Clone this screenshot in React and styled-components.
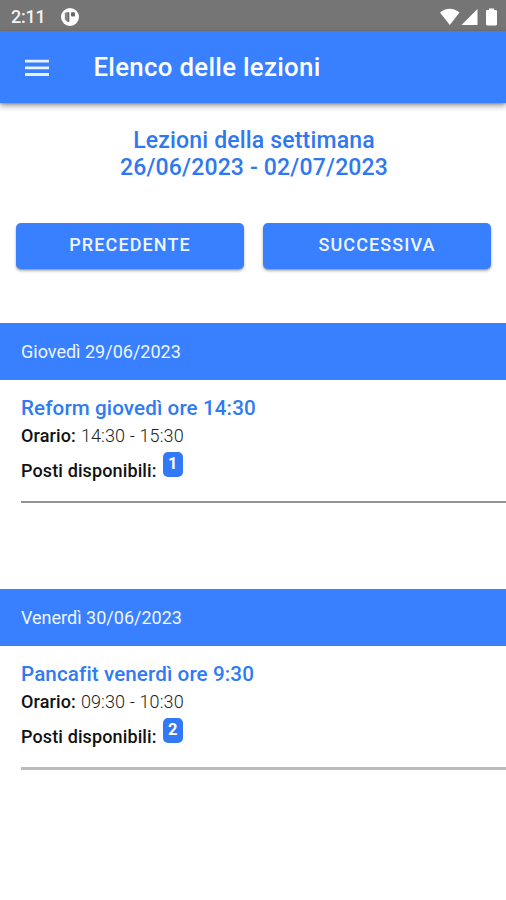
import React from 'react';
import styled, { createGlobalStyle } from 'styled-components';

const GlobalStyle = createGlobalStyle`
	* {
		box-sizing: border-box;
	}

	body {
		margin: 0;
		background: #fff;
		font-family: Roboto, sans-serif;
		overflow: hidden;
	}
`;

const Page = styled.div`
	display: flex;
	flex-direction: column;
	width: 100%;
	height: 100vh;
`;

const StatusBar = styled.div`
	display: flex;
	flex: none;
	align-items: center;
	height: 31px;
	padding: 2px 9px 0 11px;
	background: #757575;
	color: #fff;
`;

const Clock = styled.span`
	width: 50px;
	font-size: 18px;
	font-weight: 500;
	line-height: 20px;
	letter-spacing: -0.2px;
	color: #f2f2f2;
`;

const StatusIcons = styled.div`
	display: flex;
	margin-left: auto;
`;

const Toolbar = styled.header`
	display: flex;
	flex: none;
	align-items: center;
	height: 72px;
	padding: 0 25px;
	background: #3880ff;
	color: #fff;
	box-shadow: 0 3px 6px rgba(0, 0, 0, 0.36), 0 1px 2px rgba(0, 0, 0, 0.2);
`;

const MenuButton = styled.button`
	display: flex;
	margin: 2px 44.5px 0 0;
	padding: 0;
	border: 0;
	background: none;
	color: inherit;
`;

const Title = styled.h1`
	margin: 0;
	font-size: 25.8px;
	font-weight: 500;
	line-height: 30px;
	letter-spacing: 0.3px;
`;

const Week = styled.h2`
	margin: 24px 0 0 2px;
	font-size: 23px;
	font-weight: 500;
	line-height: 27px;
	letter-spacing: 0.17px;
	text-align: center;
	color: #2f78f2;
`;

const Buttons = styled.div`
	display: flex;
	gap: 19px;
	margin: 42px 15px 54px 16px;
`;

const WeekButton = styled.button`
	flex: 1;
	height: 46px;
	padding: 0 0 3px;
	border: 0;
	border-radius: 5px;
	background: #3880ff;
	color: #eef5ff;
	font-family: inherit;
	font-size: 18px;
	font-weight: 500;
	letter-spacing: 1.1px;
	box-shadow: 0 2px 3px rgba(0, 0, 0, 0.3), 0 1px 1px rgba(0, 0, 0, 0.15);
`;

const Day = styled.section`
	height: 266px;
`;

const DayHeader = styled.div`
	display: flex;
	align-items: center;
	height: 57px;
	padding-left: 21px;
	background: #3880ff;
	color: #eef5ff;
	font-size: 18px;
`;

const Lesson = styled.div`
	height: ${ props => props.thick ? '124px' : '123px' };
	margin-left: 21px;
	padding-top: 16px;
	border-bottom: ${ props => props.thick ? '3px solid #bcbcbc' : '2px solid #929292' };
`;

const LessonName = styled.h3`
	margin: 0;
	font-size: 20.6px;
	font-weight: 500;
	line-height: 25px;
	letter-spacing: 0.11px;
	color: #2f7af5;
`;

const Detail = styled.p`
	display: flex;
	margin: 1px 0 0;
	font-size: 18px;
	font-weight: 300;
	line-height: 27px;
	letter-spacing: 0.12px;
	color: #222;
`;

const Label = styled.span`
	margin-right: 5px;
	font-weight: 500;
	color: #111;
`;

const Seats = styled(Detail)`
	margin-top: 3px;
	align-items: flex-start;

	${ Label } {
		margin: 5px 6px 0 0;
	}
`;

const Badge = styled.span`
	width: 20px;
	height: 25px;
	border-radius: 5px;
	background: #3179f6;
	color: #fff;
	font-size: 16.5px;
	font-weight: 700;
	line-height: 24px;
	letter-spacing: 0;
	text-align: center;
`;

const lessons = [
	{ day: 'Giovedì 29/06/2023', name: 'Reform giovedì ore 14:30', time: '14:30 - 15:30', seats: 1 },
	{ day: 'Venerdì 30/06/2023', name: 'Pancafit venerdì ore 9:30', time: '09:30 - 10:30', seats: 2, thick: true },
];

const App = () => (
	<Page>
		<GlobalStyle />
		<StatusBar>
			<Clock>2:11</Clock>
			<svg width="18" height="18" viewBox="0 0 18 18">
				<circle cx="9" cy="9" r="9" fill="#fff" />
				<path d="M4.8 4.2h3.4v9.6H6.2L3.8 11.4V5.6z" fill="#858585" />
				<path d="M7.2 4.2h1v9.6h-1z" fill="#606060" />
				<rect x="10" y="4.2" width="4" height="4.2" rx="1" fill="#666" />
			</svg>
			<StatusIcons>
				<svg width="57" height="18" viewBox="0 0 57 18" fill="#fff">
					<path d="M0 4.5C5.5-.6 14-.6 19.5 4.5L9.8 17z" />
					<path d="M37.5 1v16h-16z" />
					<path d="M49 .5h5V2h2.2l.8.8v13.7l-1 1h-9l-1-1V2.8l.8-.8H49z" />
				</svg>
			</StatusIcons>
		</StatusBar>
		<Toolbar>
			<MenuButton aria-label="Menu">
				<svg width="24" height="18" viewBox="0 0 24 18" fill="#e9f1ff">
					<path d="M0 .7h24v2.8H0zM0 7.4h24v2.8H0zM0 14.1h24v2.8H0z" />
				</svg>
			</MenuButton>
			<Title>Elenco delle lezioni</Title>
		</Toolbar>
		<Week>
			Lezioni della settimana
			<br />
			26/06/2023 - 02/07/2023
		</Week>
		<Buttons>
			<WeekButton>PRECEDENTE</WeekButton>
			<WeekButton>SUCCESSIVA</WeekButton>
		</Buttons>
		{lessons.map(lesson => (
			<Day key={lesson.day}>
				<DayHeader>{lesson.day}</DayHeader>
				<Lesson thick={lesson.thick ? 1 : undefined}>
					<LessonName>{lesson.name}</LessonName>
					<Detail>
						<Label>Orario:</Label>
						{lesson.time}
					</Detail>
					<Seats>
						<Label>Posti disponibili:</Label>
						<Badge>{lesson.seats}</Badge>
					</Seats>
				</Lesson>
			</Day>
		))}
	</Page>
);

export default App;
